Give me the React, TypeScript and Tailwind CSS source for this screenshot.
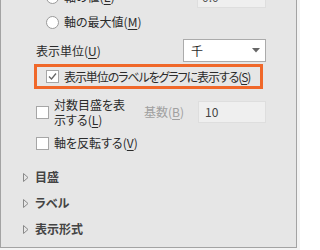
const font = "[font-family:'Noto_Sans_CJK_JP','Noto_Sans',sans-serif] [font-feature-settings:'palt']"

function Key({ k }: { k: string }) {
  return (
    <>
      (<span className="underline underline-offset-2">{k}</span>)
    </>
  )
}

function Radio() {
  return <span className="w-[13px] h-[13px] rounded-full border border-[#9a9a9a] bg-white shrink-0" />
}

function Box({ checked }: { checked?: boolean }) {
  return (
    <span className="w-[13px] h-[13px] border border-[#a6a6a6] bg-white shrink-0 flex items-center justify-center">
      {checked && (
        <svg width="11" height="11" viewBox="0 0 11 11">
          <path d="M2 5.5 L4.5 8 L9 2.5" fill="none" stroke="#666" strokeWidth="1.3" />
        </svg>
      )}
    </span>
  )
}

function Section({ label }: { label: string }) {
  return (
    <div className="h-[26px] flex items-center pl-[22px] gap-[6px]">
      <svg width="6" height="9" viewBox="0 0 6 9">
        <path d="M0.5 0.5 L5 4.5 L0.5 8.5 Z" fill="none" stroke="#8a8a8a" strokeWidth="1" />
      </svg>
      <span className="font-bold text-[12px] text-[#444]">{label}</span>
    </div>
  )
}

export default function App() {
  return (
    <div className={`w-[300px] h-[250px] bg-[#f3f3f3] overflow-hidden ${font}`}>
      <div className="w-[297px] h-[248px] bg-[#e6e6e6] border-l border-r border-b border-[#a3a3a3] overflow-hidden text-[12px] text-[#2b2b2b] leading-none whitespace-nowrap">
        {/* partially scrolled row */}
        <div className="h-[24px] -mt-[15px] flex items-center">
          <div className="flex items-center gap-[5px] pl-[45px] w-[196px]">
            <Radio />
            <span>軸の値<Key k="E" /></span>
          </div>
          <div className="w-[69px] h-[22px] bg-[#efefef] border border-[#dedede] flex items-center pl-[4px] text-[#555]">0.0</div>
        </div>
        <div className="h-[26px] flex items-center gap-[5px] pl-[45px]">
          <Radio />
          <span>軸の最大値<Key k="M" /></span>
        </div>
        <div className="h-[23px] mt-[4px] flex items-center">
          <span className="pl-[35px] w-[182px]">表示単位<Key k="U" /></span>
          <div className="w-[83px] h-[23px] bg-white border border-[#ababab] flex items-center justify-between pl-[7px] pr-[5px]">
            <span>千</span>
            <svg width="8" height="5" viewBox="0 0 8 5">
              <path d="M0 0 H8 L4 4.5 Z" fill="#666" />
            </svg>
          </div>
        </div>
        <div className="ml-[33px] mt-[2px] w-[229px] h-[25px] border-[3px] border-[#f0682a] flex items-center gap-[5px] pl-[9px]">
          <Box checked />
          <span className="tracking-[-1.1px]">表示単位のラベルをグラフに表示する<Key k="S" /></span>
        </div>
        <div className="mt-[8px] h-[30px] flex items-center">
          <div className="pl-[35px] w-[143px] flex items-center gap-[5px]">
            <Box />
            <span className="leading-[15px]">
              対数目盛を表
              <br />
              示する<Key k="L" />
            </span>
          </div>
          <span className="w-[54px] text-[#a0a0a0]">基数<Key k="B" /></span>
          <div className="w-[68px] h-[22px] bg-[#efefef] border border-[#dedede] flex items-center pl-[6px] text-[#444]">10</div>
        </div>
        <div className="mt-[4px] h-[24px] flex items-center gap-[5px] pl-[35px]">
          <Box />
          <span>軸を反転する<Key k="V" /></span>
        </div>
        <div className="mt-[9px]">
          <Section label="目盛" />
          <Section label="ラベル" />
          <Section label="表示形式" />
        </div>
      </div>
    </div>
  )
}
